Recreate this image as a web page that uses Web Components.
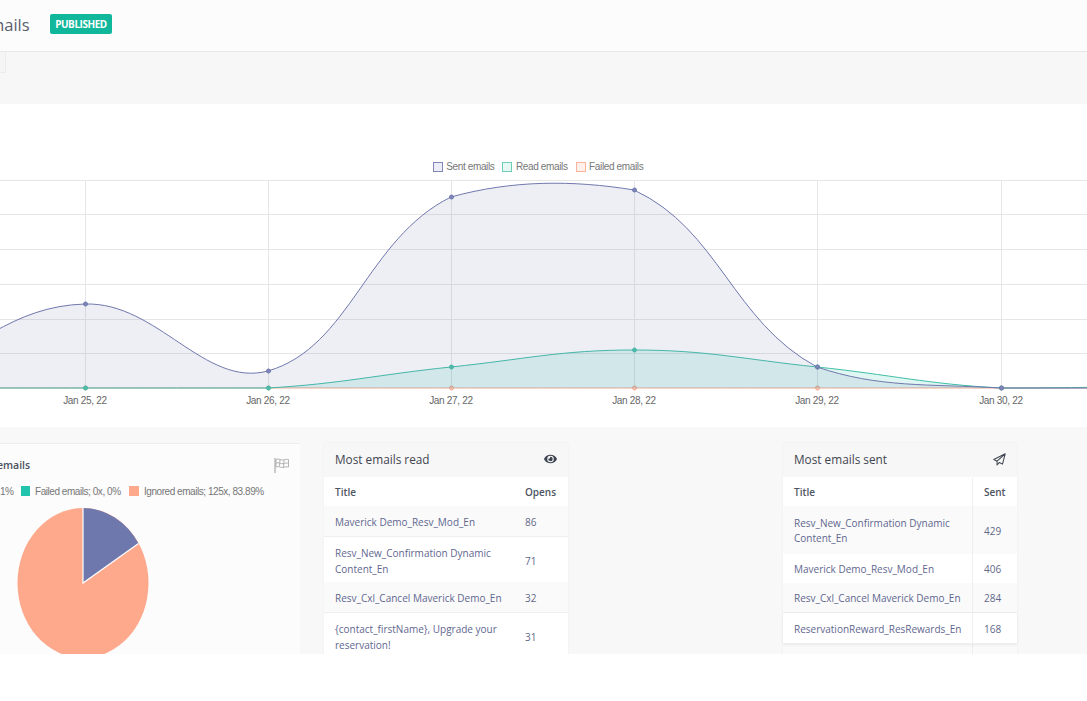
<!DOCTYPE html>
<html>
<head>
<meta charset="utf-8">
<style>
  html, body { margin: 0; background: #fff; }
  body { font-family: "Open Sans", sans-serif; overflow: hidden; }
  #page { height: 654px; overflow: hidden; background: #f8f8f8; }
</style>
</head>
<body>
<div id="page">
  <page-header></page-header>
  <page-toolbar></page-toolbar>
  <email-chart></email-chart>
  <stats-row>
    <pie-panel></pie-panel>
    <stat-card column="Opens" style="--num-col:54px;--width:244px;--gap:24px;--lh:16px">
      <span slot="title">Most emails read</span>
      <svg slot="icon" width="13" height="12" viewBox="0 0 576 512"><path fill="#3f4550" d="M572.52 241.4C518.29 135.59 410.93 64 288 64S57.68 135.64 3.48 241.41a32.35 32.35 0 0 0 0 29.19C57.71 376.41 165.07 448 288 448s230.32-71.64 284.52-177.41a32.35 32.35 0 0 0 0-29.19zM288 400a144 144 0 1 1 144-144 143.93 143.93 0 0 1-144 144zm0-240a95.31 95.31 0 0 0-25.31 3.79 47.85 47.85 0 0 1-66.9 66.9A95.78 95.78 0 1 0 288 160z"/></svg>
      <stat-row shade line value="86" style="--h:31px">Maverick Demo_Resv_Mod_En</stat-row>
      <stat-row value="71" style="--h:45px">Resv_New_Confirmation Dynamic Content_En</stat-row>
      <stat-row shade line value="32" style="--h:31px">Resv_Cxl_Cancel Maverick Demo_En</stat-row>
      <stat-row value="31" style="--h:46px">{contact_firstName}, Upgrade your reservation!</stat-row>
    </stat-card>
    <stat-card divided column="Sent" style="--num-col:44px;--width:234px;--gap:215px;--lh:15px">
      <span slot="title">Most emails sent</span>
      <svg slot="icon" width="13" height="13" viewBox="0 0 24 24"><path fill="none" stroke="#3f4550" stroke-width="1.9" stroke-linejoin="round" d="M22.500 1.500 1.500 12l6 3.200zM22.500 1.500 7.500 15.200v7l4.200-4.800 5.800 3.100z"/></svg>
      <stat-row shade value="429" style="--h:48px">Resv_New_Confirmation Dynamic Content_En</stat-row>
      <stat-row value="406" style="--h:29px">Maverick Demo_Resv_Mod_En</stat-row>
      <stat-row shade line value="284" style="--h:30px">Resv_Cxl_Cancel Maverick Demo_En</stat-row>
      <stat-row line lifted value="168" style="--h:31px">ReservationReward_ResRewards_En</stat-row>
      <stat-row shade value="" style="--h:30px"></stat-row>
    </stat-card>
  </stats-row>
</div>

<script>
class PageHeader extends HTMLElement {
    constructor() {
        super();
        this.attachShadow({ mode: "open" });
        this.shadowRoot.innerHTML = `
            <style>
                :host {
                    display: flex;
                    align-items: center;
                    height: 48px;
                    padding-bottom: 3px;
                    background: #fcfcfc;
                    border-bottom: 1px solid #e8e8e8;
                    font-family: "Open Sans", sans-serif;
                }
                .title { font-size: 16.500px; color: #58606c; line-height: 1; margin: 2px 0 0 -11px; width: 61px; flex: none; }
                .badge {
                    background: #10b79a;
                    color: #fff;
                    font-size: 10px;
                    font-weight: 700;
                    letter-spacing: -.45px;
                    width: 62px;
                    height: 20px;
                    line-height: 20px;
                    text-align: center;
                    border-radius: 2px;
                }
            </style>
            <span class="title">mails</span>
            <span class="badge">PUBLISHED</span>
        `;
    }
}
customElements.define("page-header", PageHeader);

class PageToolbar extends HTMLElement {
    constructor() {
        super();
        this.attachShadow({ mode: "open" });
        this.shadowRoot.innerHTML = `
            <style>
                :host {
                    display: block;
                    height: 52px;
                    background: #f7f7f7;
                }
                .tab {
                    width: 5px;
                    height: 20px;
                    background: #f5f5f5;
                    border: solid #ececec;
                    border-width: 0 1px 1px 0;
                }
            </style>
            <div class="tab"></div>
        `;
    }
}
customElements.define("page-toolbar", PageToolbar);

class EmailChart extends HTMLElement {
    constructor() {
        super();
        this.attachShadow({ mode: "open" });
        const xs = [-98, 85, 268, 451, 634, 817, 1001, 1184];
        const sent = [382, 304, 371, 197, 190, 367, 388, 388];
        const read = [388, 388, 388, 367, 350, 367, 388, 386];
        const failed = [388, 388, 388, 388, 388, 388, 388, 388];
        const labels = ["Jan 25, 22", "Jan 26, 22", "Jan 27, 22", "Jan 28, 22", "Jan 29, 22", "Jan 30, 22"];
        const hLines = [180.5, 214.5, 249.5, 284.5, 319.5, 353.5];

        const grid = hLines.map(y => `<line x1="0" x2="1087" y1="${y}" y2="${y}"/>`).join("")
            + xs.slice(1, 7).map(x => `<line x1="${x + 0.5}" x2="${x + 0.5}" y1="180" y2="388"/>`).join("");

        const series = (ys, stroke, fill, dot) => {
            const d = this.spline(xs, ys);
            const dots = xs.slice(1, 7).map((x, i) =>
                `<circle cx="${x + 0.5}" cy="${ys[i + 1]}" r="2" fill="${dot}" stroke="${stroke}"/>`).join("");
            return `<path d="${d} L1184 388 L-98 388 Z" fill="${fill}"/>
                    <path d="${d}" fill="none" stroke="${stroke}" stroke-width="1"/>${dots}`;
        };

        this.shadowRoot.innerHTML = `
            <style>
                :host {
                    display: block;
                    height: 323px;
                    background: #fff;
                    overflow: hidden;
                    font-family: "Liberation Sans", Arial, sans-serif;
                }
                .legend {
                    display: flex;
                    justify-content: center;
                    gap: 8px;
                    padding: 54px 11px 0 0;
                    height: 17px;
                    font-size: 10px;
                    letter-spacing: -.36px;
                    color: #777;
                    line-height: 12px;
                }
                .legend span { display: flex; align-items: center; gap: 3.500px; }
                .legend i { width: 8px; height: 8px; border: 1px solid; display: block; }
                svg { display: block; margin-top: 1px; }
                .grid line { stroke: #e6e6e6; stroke-width: 1; }
                text { font-size: 10px; letter-spacing: -.3px; fill: #666; text-anchor: middle; }
            </style>
            <div class="legend">
                <span><i style="border-color:#8187b8;background:#ecedf6"></i>Sent emails</span>
                <span><i style="border-color:#6fceb8;background:#e6f8f4"></i>Read emails</span>
                <span><i style="border-color:#fbb39c;background:#fff0ec"></i>Failed emails</span>
            </div>
            <svg width="1087" height="251" viewBox="0 176 1087 251">
                <g class="grid">${grid}</g>
                ${series(failed, "#f4a78e", "rgba(255,160,130,.04)", "#f8c0ae")}
                ${series(read, "#3fbfa8", "rgba(38,190,170,.14)", "#4fc0a8")}
                ${series(sent, "#7078ad", "rgba(111,120,173,.12)", "#7f86b8")}
                ${xs.slice(1, 7).map((x, i) => `<text x="${x}" y="404">${labels[i]}</text>`).join("")}
            </svg>
        `;
    }

    // tension 0.4 line, control points capped to the plot area
    spline(xs, ys) {
        const t = 0.4;
        const n = xs.length;
        const cap = y => Math.min(388, Math.max(180, y));
        const cps = xs.map((x, i) => {
            const p = i > 0 ? i - 1 : i, q = i < n - 1 ? i + 1 : i;
            const d1 = Math.hypot(x - xs[p], ys[i] - ys[p]);
            const d2 = Math.hypot(xs[q] - x, ys[q] - ys[i]);
            const sum = d1 + d2 || 1;
            const dx = xs[q] - xs[p], dy = ys[q] - ys[p];
            return {
                px: x - t * d1 / sum * dx, py: cap(ys[i] - t * d1 / sum * dy),
                nx: x + t * d2 / sum * dx, ny: cap(ys[i] + t * d2 / sum * dy)
            };
        });
        let d = `M${xs[0]} ${ys[0]}`;
        for (let i = 1; i < n; i++) {
            d += ` C${cps[i - 1].nx} ${cps[i - 1].ny} ${cps[i].px} ${cps[i].py} ${xs[i]} ${ys[i]}`;
        }
        return d;
    }
}
customElements.define("email-chart", EmailChart);

class StatsRow extends HTMLElement {
    constructor() {
        super();
        this.attachShadow({ mode: "open" });
        this.shadowRoot.innerHTML = `
            <style>
                :host {
                    display: flex;
                    align-items: flex-start;
                    height: 211px;
                    padding-top: 16px;
                    overflow: hidden;
                    background: #f8f8f8;
                }
            </style>
            <slot></slot>
        `;
    }
}
customElements.define("stats-row", StatsRow);

class PiePanel extends HTMLElement {
    constructor() {
        super();
        this.attachShadow({ mode: "open" });
        this.shadowRoot.innerHTML = `
            <style>
                :host {
                    display: block;
                    flex: none;
                    width: 300px;
                    height: 260px;
                    background: #fcfcfc;
                    border-top: 1px solid #eeeeee;
                    font-family: "Open Sans", sans-serif;
                }
                .head {
                    display: flex;
                    justify-content: space-between;
                    align-items: center;
                    height: 26px;
                    padding: 8px 10px 0 0;
                    font-size: 10.500px;
                    font-weight: 600;
                    color: #4b5160;
                }
                .head span { margin-left: -3px; }
                .legend {
                    display: flex;
                    align-items: center;
                    height: 26px;
                    font: 10px "Liberation Sans", Arial, sans-serif;
                    letter-spacing: -.45px;
                    color: #777;
                }
                .legend i { display: block; width: 9px; height: 10px; margin-right: 5px; }
                svg.pie { display: block; margin: 3px 0 0 15.500px; }
            </style>
            <div class="head">
                <span>emails</span>
                <svg width="16" height="16" viewBox="0 0 16 16" fill="none" stroke="#aaaaaa" stroke-width=".9">
                    <path stroke-width="1.200" d="M1 1v15"/>
                    <path d="M2 2.500c3-1.500 4.500 1 7 .5s3.500-1 5.500-.5v7.500c-2-.5-3.500 0-5.500.5s-4-2-7-.5z"/>
                    <path d="M2 6.200c3-1.500 4.500 1 7 .5s3.500-1 5.500-.5M6 2.500 5.500 9M10 3l-.5 7.500"/>
                </svg>
            </div>
            <div class="legend">
                <span style="width:21px">1%</span>
                <i style="background:#22c4ae"></i>
                <span style="width:94px">Failed emails; 0x, 0%</span>
                <i style="background:#ffa98c;width:10px"></i>
                <span>Ignored emails; 125x, 83.89%</span>
            </div>
            <svg class="pie" width="134" height="152" viewBox="0 0 134 152">
                <ellipse cx="67" cy="76" rx="65.500" ry="75" fill="#ffa98c"/>
                <path d="M67 76V1A65.500 75 0 0 1 122.500 36.500Z" fill="#6f78ad"/>
                <path d="M67 1V76L122.500 36.500" fill="none" stroke="#fff" stroke-width="1.200"/>
            </svg>
        `;
    }
}
customElements.define("pie-panel", PiePanel);

class StatCard extends HTMLElement {
    constructor() {
        super();
        this.attachShadow({ mode: "open" });
        const divided = this.hasAttribute("divided");
        this.shadowRoot.innerHTML = `
            <style>
                :host {
                    display: block;
                    flex: none;
                    width: var(--width);
                    margin-left: var(--gap);
                    background: #fff;
                    font-family: "Open Sans", sans-serif;
                    box-shadow: 0 0 2px rgba(0,0,0,.06);
                }
                .head {
                    display: flex;
                    justify-content: space-between;
                    align-items: center;
                    box-sizing: border-box;
                    height: 34px;
                    padding: 0 11.500px 2px 11px;
                    background: #f7f7f7;
                    font-size: 11.800px;
                    font-weight: 500;
                    color: #3f4550;
                }
                .cols {
                    display: flex;
                    box-sizing: border-box;
                    height: 29px;
                    padding-top: 1px;
                    font-size: 10px;
                    font-weight: 600;
                    color: #4d5461;
                    background: #fff;
                }
                .cols span { display: flex; align-items: center; padding-left: 11px; }
                .cols .t { flex: 1; }
                .cols .n {
                    width: var(--num-col);
                    box-sizing: border-box;
                    ${divided ? "box-shadow: -1px 0 0 #eeeeee;" : ""}
                }
                ::slotted(svg) { display: block; }
            </style>
            <div class="head"><slot name="title"></slot><slot name="icon"></slot></div>
            <div class="cols"><span class="t">Title</span><span class="n">${this.getAttribute("column")}</span></div>
            <slot></slot>
        `;
        if (divided) {
            this.querySelectorAll("stat-row").forEach(r => r.setAttribute("divided", ""));
        }
    }
}
customElements.define("stat-card", StatCard);

class StatRow extends HTMLElement {
    constructor() {
        super();
        this.attachShadow({ mode: "open" });
        this.shadowRoot.innerHTML = `
            <style>
                :host {
                    display: flex;
                    align-items: stretch;
                    box-sizing: border-box;
                    height: var(--h);
                    background: #fff;
                    font-size: 10px;
                    line-height: var(--lh);
                    color: #5f6790;
                }
                :host([shade]) { background: #fafafa; }
                :host([line]) { border-bottom: 1px solid #eeeeee; }
                :host([lifted]) { box-shadow: 0 1px 3px rgba(0,0,0,.07); position: relative; }
                .t { flex: 1; align-self: center; padding: 2px 10px 0 11px; min-width: 0; }
                .n {
                    width: var(--num-col);
                    box-sizing: border-box;
                    padding: 2px 0 0 11px;
                    display: flex;
                    align-items: center;
                    color: #626988;
                }
                :host([divided]) .n { box-shadow: -1px 0 0 #eeeeee; }
            </style>
            <span class="t"><slot></slot></span>
            <span class="n">${this.getAttribute("value") || ""}</span>
        `;
    }
}
customElements.define("stat-row", StatRow);
</script>
</body>
</html>
